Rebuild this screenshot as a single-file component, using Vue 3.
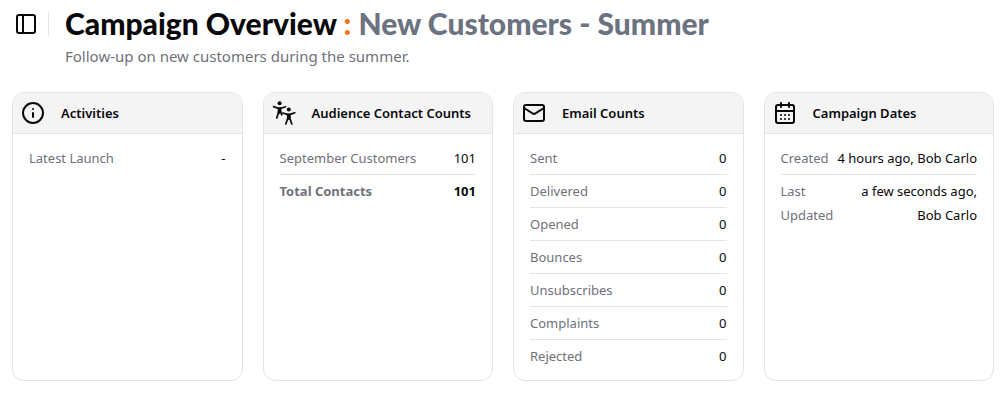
<script setup>
const cards = [
  {
    icon: 'info',
    title: 'Activities',
    rows: [{ label: 'Latest Launch', value: '-' }],
  },
  {
    icon: 'people',
    title: 'Audience Contact Counts',
    rows: [
      { label: 'September Customers', value: '101' },
      { label: 'Total Contacts', value: '101', total: true },
    ],
  },
  {
    icon: 'mail',
    title: 'Email Counts',
    rows: [
      { label: 'Sent', value: '0' },
      { label: 'Delivered', value: '0' },
      { label: 'Opened', value: '0' },
      { label: 'Bounces', value: '0' },
      { label: 'Unsubscribes', value: '0' },
      { label: 'Complaints', value: '0' },
      { label: 'Rejected', value: '0' },
    ],
  },
  {
    icon: 'calendar',
    title: 'Campaign Dates',
    rows: [
      { label: 'Created', value: '4 hours ago, Bob Carlo' },
      { label: 'Last Updated', value: 'a few seconds ago, Bob Carlo' },
    ],
  },
]
</script>

<template>
  <main class="page">
    <header class="top">
      <button class="toggle" type="button" aria-label="Toggle sidebar">
        <svg class="icon" viewBox="0 0 24 24">
          <rect x="3" y="3" width="18" height="18" rx="2" />
          <path d="M9 3v18" />
        </svg>
      </button>
      <div class="divider"></div>
      <div class="heading">
        <h1>Campaign Overview <span class="colon">:</span> <span class="name">New Customers - Summer</span></h1>
        <p>Follow-up on new customers during the summer.</p>
      </div>
    </header>

    <div class="cards">
      <section v-for="card in cards" :key="card.title" class="card">
        <div class="card-head">
          <svg v-if="card.icon === 'info'" class="icon" viewBox="0 0 24 24">
            <circle cx="12" cy="12" r="10" />
            <path d="M12 16v-4M12 8h.01" />
          </svg>
          <svg v-else-if="card.icon === 'people'" class="icon figures" viewBox="0 0 24 24">
            <circle class="solid" cx="7.6" cy="2.2" r="2" />
            <path d="M1.6 5.6 6 7.2h3L13.6 5.8" />
            <path class="solid" d="M5.7 6.6h3.8v4.8l-1.9 1.6-1.9-1.6z" />
            <path d="M6.6 11 4.8 17M8.6 11 9.8 13.8" />
            <circle class="solid" cx="16.8" cy="8.4" r="2" />
            <path d="M10.8 12 15.2 13.4h3L22.8 11.8" />
            <path class="solid" d="M14.9 12.8h3.8v4.8l-1.9 1.6-1.9-1.6z" />
            <path d="M15.8 17.2 13.8 23M17.8 17.2 19.8 23" />
          </svg>
          <svg v-else-if="card.icon === 'mail'" class="icon" viewBox="0 0 24 24">
            <rect x="2" y="4" width="20" height="16" rx="2" />
            <path d="m22 7-8.97 5.7a1.94 1.94 0 0 1-2.06 0L2 7" />
          </svg>
          <svg v-else class="icon" viewBox="0 0 24 24">
            <path d="M8 2v4M16 2v4M3 10h18" />
            <rect x="3" y="4" width="18" height="18" rx="2" />
            <path d="M8 14h.01M12 14h.01M16 14h.01M8 18h.01M12 18h.01M16 18h.01" />
          </svg>
          <h2>{{ card.title }}</h2>
        </div>
        <dl>
          <div v-for="row in card.rows" :key="row.label" class="row" :class="{ total: row.total }">
            <dt>{{ row.label }}</dt>
            <dd>{{ row.value }}</dd>
          </div>
        </dl>
      </section>
    </div>
  </main>
</template>

<style>
body {
  margin: 0;
  background: #fff;
}
</style>

<style scoped>
.page {
  padding: 8px 14px 22px 12px;
  font-family: "Noto Sans", "Open Sans", sans-serif;
  font-size: 13px;
  line-height: 24px;
  color: #09090b;
}
h1, h2, p, dl, dt, dd {
  margin: 0;
}
.top {
  display: flex;
  align-items: flex-start;
  margin-bottom: 20px;
}
.toggle {
  display: flex;
  margin: 4px 10px 0 0;
  padding: 0 0 0 2px;
  border: 0;
  background: none;
  color: inherit;
  cursor: pointer;
}
.icon {
  flex: none;
  width: 24px;
  height: 24px;
  fill: none;
  stroke: currentColor;
  stroke-width: 2;
  stroke-linecap: round;
  stroke-linejoin: round;
}
.figures {
  overflow: visible;
  stroke-width: 1.7;
}
.figures .solid {
  fill: currentColor;
  stroke: none;
}
.divider {
  width: 1px;
  height: 24px;
  margin: 4px 16px 0 0;
  background: #e4e4e7;
}
.heading {
  display: grid;
  gap: 2px;
}
h1 {
  font-family: Lato, "Liberation Sans", sans-serif;
  font-size: 30px;
  font-weight: 900;
  line-height: 30px;
}
.colon {
  color: #f97316;
}
.name {
  color: #6b7280;
}
.heading p {
  font-size: 15px;
  line-height: 32px;
  color: #71717a;
}
.cards {
  display: grid;
  grid-template-columns: repeat(4, minmax(0, 1fr));
  gap: 20px;
}
.card {
  border: 1px solid #e4e4e7;
  border-radius: 12px;
  overflow: hidden;
}
.card-head {
  display: flex;
  align-items: center;
  gap: 16px;
  padding: 8px;
  border-bottom: 1px solid #e4e4e7;
  background: #f4f4f5;
}
h2 {
  font-size: 13px;
  font-weight: 600;
  line-height: 24px;
  white-space: nowrap;
}
dl {
  padding: 8px 16px;
}
.row {
  display: flex;
  justify-content: space-between;
  gap: 8px;
  padding: 4px 0;
}
.row + .row {
  border-top: 1px solid #e4e4e7;
}
dt {
  color: #71717a;
}
dd {
  text-align: right;
}
.total {
  font-weight: 700;
}
</style>
